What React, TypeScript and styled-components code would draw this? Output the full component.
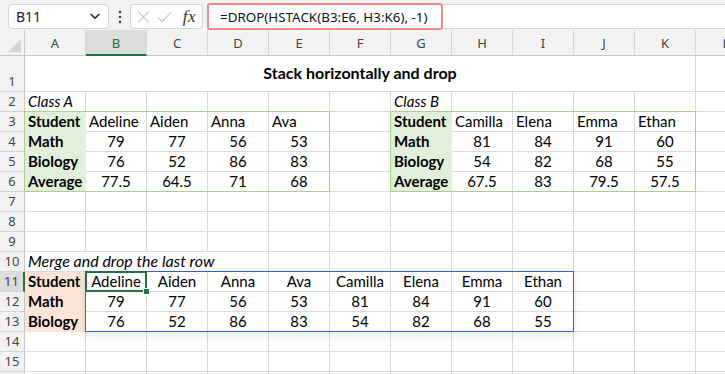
import React from 'react';
import styled, { createGlobalStyle } from 'styled-components';

const Global = createGlobalStyle`
  html, body { margin: 0; padding: 0; background: #fff; overflow: hidden; }
  #root { width: 725px; height: 374px; }
`;

const GRID = '#dadada';
const HEAD_BG = '#f2f2f2';
const GREEN = '#217346';
const UI_FONT = '"Segoe UI", "Noto Sans", "Open Sans", sans-serif';
const CELL_FONT = 'Lato, "Liberation Sans", sans-serif';

const Page = styled.div`
  width: 725px;
  height: 374px;
  overflow: hidden;
  display: flex;
  flex-direction: column;
  background: #fff;
`;

const FormulaBar = styled.div`
  height: 30px;
  flex: none;
  box-sizing: border-box;
  background: ${HEAD_BG};
  display: flex;
  align-items: flex-start;
  padding: 4px 0 0 8px;
`;

const NameBox = styled.div`
  width: 101px;
  height: 25px;
  flex: none;
  box-sizing: border-box;
  background: #fff;
  border: 1px solid #d4d4d4;
  border-radius: 4px;
  display: flex;
  align-items: center;
  justify-content: space-between;
  padding: 0 8px 0 7px;
  font: 14px ${UI_FONT};
  color: #222;
`;

const Dots = styled.div`
  width: 21px;
  height: 25px;
  flex: none;
  display: flex;
  align-items: center;
  justify-content: center;
`;

const FxBox = styled.div`
  width: 73px;
  height: 25px;
  flex: none;
  box-sizing: border-box;
  background: #fff;
  border: 1px solid #d4d4d4;
  border-radius: 4px;
  display: flex;
  align-items: center;
  padding: 0 6px 0 6px;
  gap: 7px;
`;

const Fx = styled.span`
  font: italic 17px "Liberation Serif", "DejaVu Serif", serif;
  color: #333;
  margin-left: 4px;
  letter-spacing: 0.5px;
`;

const FormulaInput = styled.div`
  flex: 1;
  height: 25px;
  margin-left: 4px;
  box-sizing: border-box;
  background: #fff;
  border-top: 1px solid #d4d4d4;
  border-bottom: 1px solid #d4d4d4;
  display: flex;
  align-items: center;
`;

const Highlight = styled.span`
  height: 27px;
  box-sizing: border-box;
  border: 2px solid #f28a8a;
  border-radius: 3px;
  display: flex;
  align-items: center;
  padding: 0 13px 0 11px;
  font: 13.4px ${UI_FONT};
  color: #111;
  white-space: nowrap;
`;

const Sheet = styled.div`
  flex: 1;
  display: grid;
  grid-template-columns: 25px repeat(12, 61px);
  grid-template-rows: 26px 36px repeat(15, 20px);
  overflow: hidden;
`;

const Corner = styled.div`
  grid-row: 1;
  grid-column: 1;
  box-sizing: border-box;
  background: ${HEAD_BG};
  border-right: 1px solid #c8c8c8;
  border-bottom: 1px solid #c8c8c8;
  display: flex;
  align-items: flex-end;
  justify-content: flex-end;
  padding: 0 3px 3px 0;
`;

const ColHead = styled.div<{ $c: number; $sel?: boolean }>`
  grid-row: 1;
  grid-column: ${p => p.$c};
  box-sizing: border-box;
  background: ${p => (p.$sel ? '#dcdcdc' : HEAD_BG)};
  border-right: 1px solid #d6d6d6;
  border-bottom: ${p => (p.$sel ? `2px solid ${GREEN}` : '1px solid #c8c8c8')};
  display: flex;
  align-items: center;
  justify-content: center;
  padding-top: ${p => (p.$sel ? '1px' : '0')};
  font: 13px ${UI_FONT};
  color: ${p => (p.$sel ? GREEN : '#444')};
`;

const RowHead = styled.div<{ $r: number; $sel?: boolean }>`
  grid-row: ${p => p.$r};
  grid-column: 1;
  box-sizing: border-box;
  background: ${p => (p.$sel ? '#dcdcdc' : HEAD_BG)};
  border-right: ${p => (p.$sel ? `2px solid ${GREEN}` : '1px solid #c8c8c8')};
  border-bottom: 1px solid #d6d6d6;
  display: flex;
  align-items: flex-end;
  justify-content: center;
  padding-bottom: 1px;
  font: 13px/17px ${UI_FONT};
  color: #444;
`;

const Cell = styled.div<{
  $r: number;
  $c: number;
  $span: number;
  $bold?: boolean;
  $italic?: boolean;
  $align: string;
  $valign: string;
  $fill?: string;
  $size: number;
}>`
  grid-row: ${p => p.$r};
  grid-column: ${p => p.$c} / span ${p => p.$span};
  box-sizing: border-box;
  min-width: 0;
  background: ${p => p.$fill || '#fff'};
  border-right: 1px solid ${p => p.$fill || GRID};
  border-bottom: 1px solid ${p => p.$fill || GRID};
  display: flex;
  align-items: ${p => p.$valign};
  justify-content: ${p => p.$align};
  padding: 0 3px 1px 3px;
  font-family: ${CELL_FONT};
  font-size: ${p => p.$size}px;
  line-height: 18px;
  font-weight: ${p => (p.$bold ? 700 : 400)};
  font-style: ${p => (p.$italic ? 'italic' : 'normal')};
  color: #000;
  white-space: nowrap;
`;

const Frame = styled.div<{ $r1: number; $c1: number; $r2: number; $c2: number; $color: string; $shadow?: boolean }>`
  grid-row: ${p => p.$r1} / ${p => p.$r2 + 1};
  grid-column: ${p => p.$c1} / ${p => p.$c2 + 1};
  margin: -1px 0 0 -1px;
  border: 1px solid ${p => p.$color};
  box-shadow: ${p => (p.$shadow ? '0 3px 8px rgba(0,0,0,0.10)' : 'none')};
  position: relative;
  pointer-events: none;
  z-index: 2;
`;

const Selection = styled.div<{ $r: number; $c: number }>`
  grid-row: ${p => p.$r};
  grid-column: ${p => p.$c};
  margin: -1px 0 0 -1px;
  border: 2px solid ${GREEN};
  position: relative;
  pointer-events: none;
  z-index: 3;
`;

const FillHandle = styled.div`
  position: absolute;
  right: -5px;
  bottom: -5px;
  width: 5px;
  height: 5px;
  background: ${GREEN};
  border: 1px solid #fff;
`;

type Def = {
  text: string;
  bold?: boolean;
  italic?: boolean;
  align?: 'flex-start' | 'center' | 'flex-end';
  valign?: 'center' | 'flex-end';
  span?: number;
  size?: number;
};

const COLS = ['A', 'B', 'C', 'D', 'E', 'F', 'G', 'H', 'I', 'J', 'K', 'L'];
const ROWS = 15;

const defs: Record<string, Def> = {};
const put = (r: number, c: number, d: Def) => {
  defs[`${r}:${c}`] = d;
};

put(1, 1, { text: 'Stack horizontally and drop', bold: true, align: 'center', valign: 'center', span: 11, size: 16 });
put(2, 1, { text: 'Class A', italic: true });
put(2, 7, { text: 'Class B', italic: true });

const tableA = {
  names: ['Adeline', 'Aiden', 'Anna', 'Ava'],
  rows: [
    ['Math', '79', '77', '56', '53'],
    ['Biology', '76', '52', '86', '83'],
    ['Average', '77.5', '64.5', '71', '68'],
  ],
};
const tableB = {
  names: ['Camilla', 'Elena', 'Emma', 'Ethan'],
  rows: [
    ['Math', '81', '84', '91', '60'],
    ['Biology', '54', '82', '68', '55'],
    ['Average', '67.5', '83', '79.5', '57.5'],
  ],
};

[
  { t: tableA, c0: 1 },
  { t: tableB, c0: 7 },
].forEach(({ t, c0 }) => {
  put(3, c0, { text: 'Student', bold: true });
  t.names.forEach((n, i) => put(3, c0 + 1 + i, { text: n }));
  t.rows.forEach((row, ri) => {
    put(4 + ri, c0, { text: row[0], bold: true });
    row.slice(1).forEach((v, i) => put(4 + ri, c0 + 1 + i, { text: v, align: 'center' }));
  });
});

put(10, 1, { text: 'Merge and drop the last row', italic: true, span: 4, size: 16 });
put(11, 1, { text: 'Student', bold: true });
[...tableA.names, ...tableB.names].forEach((n, i) => put(11, 2 + i, { text: n, align: 'center' }));
const merged = [
  ['Math', '79', '77', '56', '53', '81', '84', '91', '60'],
  ['Biology', '76', '52', '86', '83', '54', '82', '68', '55'],
];
merged.forEach((row, ri) => {
  put(12 + ri, 1, { text: row[0], bold: true });
  row.slice(1).forEach((v, i) => put(12 + ri, 2 + i, { text: v, align: 'center' }));
});

const fillFor = (r: number, c: number): string | undefined => {
  if (r >= 3 && r <= 6 && (c === 1 || c === 7)) return '#e2efda';
  if (r >= 11 && r <= 13 && c === 1) return '#fce4d6';
  return undefined;
};

const Chevron = () => (
  <svg width="10" height="7" viewBox="0 0 10 7">
    <path d="M1.2 1.5 L5 5.2 L8.8 1.5" fill="none" stroke="#222" strokeWidth="1.6" strokeLinecap="round" strokeLinejoin="round" />
  </svg>
);

const VDots = () => (
  <svg width="4" height="14" viewBox="0 0 4 14">
    <circle cx="2" cy="2" r="1.3" fill="#444" />
    <circle cx="2" cy="7" r="1.3" fill="#444" />
    <circle cx="2" cy="12" r="1.3" fill="#444" />
  </svg>
);

const CancelIcon = () => (
  <svg width="14" height="14" viewBox="0 0 14 14">
    <path d="M1 1 L13 13 M13 1 L1 13" stroke="#c4c4c4" strokeWidth="1.2" fill="none" />
  </svg>
);

const CheckIcon = () => (
  <svg width="16" height="14" viewBox="0 0 16 14">
    <path d="M1 7.5 L5.5 12 L15 2" stroke="#c4c4c4" strokeWidth="1.2" fill="none" />
  </svg>
);

const CornerTriangle = () => (
  <svg width="13" height="13" viewBox="0 0 13 13">
    <polygon points="13,0 13,13 0,13" fill="#d4d4d4" />
  </svg>
);

export default function App() {
  const cells: React.ReactNode[] = [];
  for (let r = 1; r <= ROWS + 1; r++) {
    let c = 1;
    while (c <= COLS.length) {
      const d = defs[`${r}:${c}`];
      const span = d?.span ?? 1;
      cells.push(
        <Cell
          key={`${r}-${c}`}
          $r={r + 1}
          $c={c + 1}
          $span={span}
          $bold={d?.bold}
          $italic={d?.italic}
          $align={d?.align ?? 'flex-start'}
          $valign={d?.valign ?? 'flex-end'}
          $fill={fillFor(r, c)}
          $size={d?.size ?? 15}
        >
          {d?.text ?? ''}
        </Cell>
      );
      c += span;
    }
  }

  return (
    <Page>
      <Global />
      <FormulaBar>
        <NameBox>
          <span>B11</span>
          <Chevron />
        </NameBox>
        <Dots>
          <VDots />
        </Dots>
        <FxBox>
          <CancelIcon />
          <CheckIcon />
          <Fx>fx</Fx>
        </FxBox>
        <FormulaInput>
          <Highlight>=DROP(HSTACK(B3:E6, H3:K6), -1)</Highlight>
        </FormulaInput>
      </FormulaBar>
      <Sheet>
        <Corner>
          <CornerTriangle />
        </Corner>
        {COLS.map((l, i) => (
          <ColHead key={l} $c={i + 2} $sel={l === 'B'}>
            {l}
          </ColHead>
        ))}
        {Array.from({ length: ROWS + 1 }, (_, i) => (
          <RowHead key={i} $r={i + 2} $sel={i + 1 === 11}>
            {i < ROWS ? i + 1 : ''}
          </RowHead>
        ))}
        {cells}
        <Frame $r1={4} $c1={2} $r2={7} $c2={6} $color="#a9d08e" />
        <Frame $r1={4} $c1={8} $r2={7} $c2={12} $color="#a9d08e" />
        <Frame $r1={12} $c1={3} $r2={14} $c2={10} $color="#2f62c2" $shadow />
        <Selection $r={12} $c={3}>
          <FillHandle />
        </Selection>
      </Sheet>
    </Page>
  );
}
